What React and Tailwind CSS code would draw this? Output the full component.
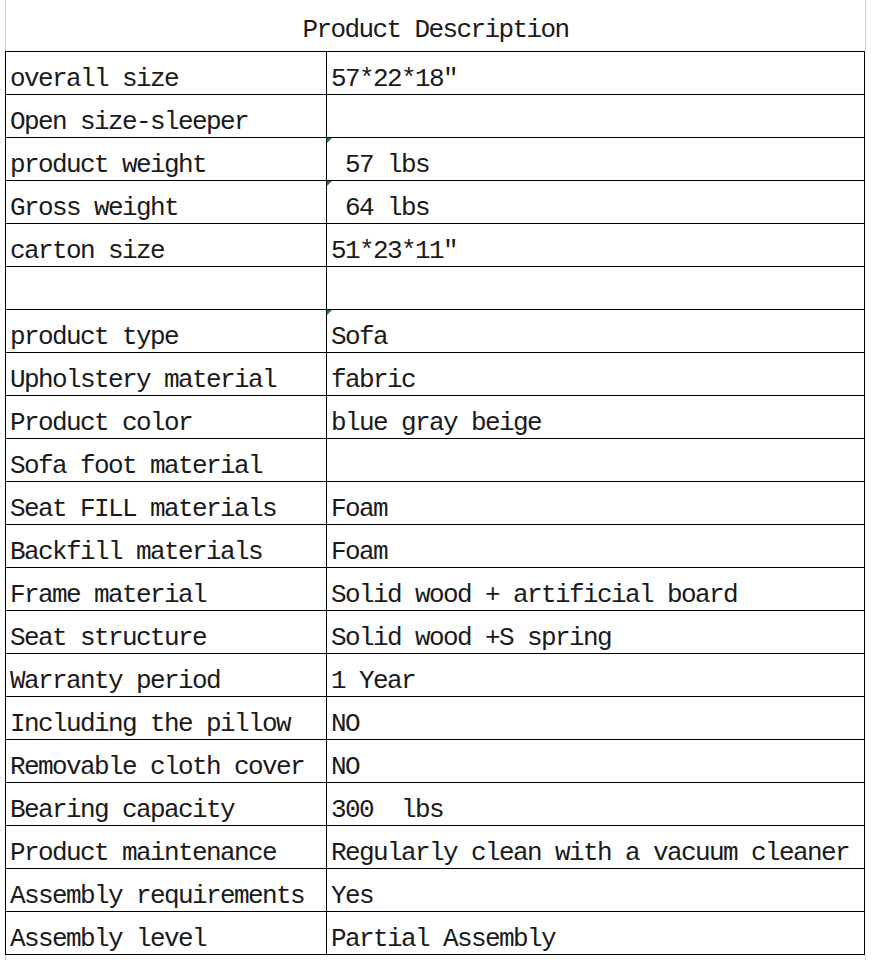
const rows = [
  ["overall size", "57*22*18″"],
  ["Open size-sleeper", ""],
  ["product weight", " 57 lbs", true],
  ["Gross weight", " 64 lbs", true],
  ["carton size", "51*23*11″"],
  ["", ""],
  ["product type", "Sofa", true],
  ["Upholstery material", "fabric"],
  ["Product color", "blue gray beige"],
  ["Sofa foot material", ""],
  ["Seat FILL materials", "Foam"],
  ["Backfill materials", "Foam"],
  ["Frame material", "Solid wood + artificial board"],
  ["Seat structure", "Solid wood +S spring"],
  ["Warranty period", "1 Year"],
  ["Including the pillow", "NO"],
  ["Removable cloth cover", "NO"],
  ["Bearing capacity", "300  lbs"],
  ["Product maintenance", "Regularly clean with a vacuum cleaner"],
  ["Assembly requirements", "Yes"],
  ["Assembly level", "Partial Assembly"],
];

function Row({ label, value, flag }) {
  return (
    <div className="flex h-[43px] border-b border-black">
      <div className="flex w-[321px] items-end whitespace-pre border-r border-black pb-[2px] pl-[4px]">
        {label}
      </div>
      <div className="relative flex flex-1 items-end whitespace-pre pb-[2px] pl-[4px]">
        {flag && (
          <span className="absolute left-0 top-0 h-0 w-0 border-r-[5px] border-t-[5px] border-r-transparent border-t-[#1e7b34]" />
        )}
        {value}
      </div>
    </div>
  );
}

export default function App() {
  return (
    <div
      className="relative h-[960px] w-[871px] overflow-hidden bg-white text-[26px] leading-none tracking-[-1.6px] text-[#1a1a1a]"
      style={{ fontFamily: '"Liberation Mono", monospace' }}
    >
      <div className="flex h-[51px] ml-[5px] w-[861px] items-end justify-center border-x border-[#d4d4d8] pb-[8px]">
        Product Description
      </div>
      <div className="ml-[5px] w-[860px] border-l border-r border-t border-black">
        {rows.map(([label, value, flag], i) => (
          <Row key={i} label={label} value={value} flag={flag} />
        ))}
      </div>
      <div className="ml-[5px] h-[8px] w-[861px] border-x border-[#d4d4d8]" />
    </div>
  );
}
